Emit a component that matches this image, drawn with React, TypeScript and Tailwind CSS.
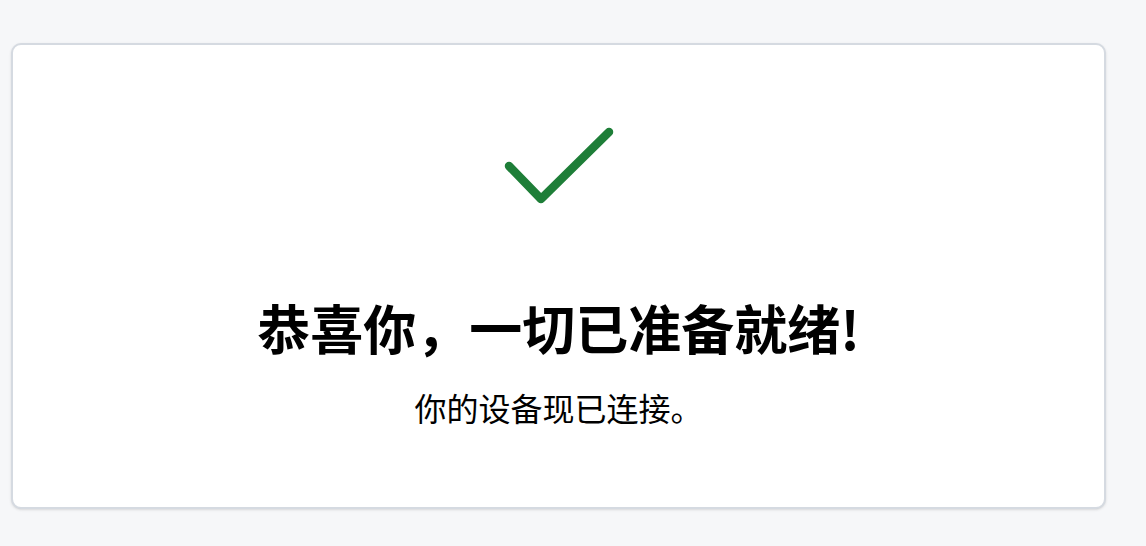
export default function App() {
  return (
    <div
      className="min-h-[546px] w-full bg-[#f6f7f9] pl-[11px] pt-[43px]"
      style={{ fontFamily: "'Noto Sans CJK SC', 'Noto Sans', sans-serif" }}
    >
      {/* Card */}
      <div className="flex h-[466px] w-[1095px] flex-col items-center rounded-[10px] border-2 border-[#d5dae1] bg-white pt-[45px] shadow-sm">
        {/* Check icon */}
        <svg width="150" height="150" viewBox="0 0 150 150" fill="none">
          <polyline
            points="25,76 57,109 125,42"
            stroke="#1e7e38"
            strokeWidth="8.5"
            strokeLinecap="round"
            strokeLinejoin="round"
          />
        </svg>

        <h1 className="mt-[50px] text-[53px] font-bold leading-[75px] text-black">
          恭喜你，一切已准备就绪!
        </h1>
        <p className="mt-[19px] text-[32px] leading-[46px] text-black">
          你的设备现已连接。
        </p>
      </div>
    </div>
  )
}
